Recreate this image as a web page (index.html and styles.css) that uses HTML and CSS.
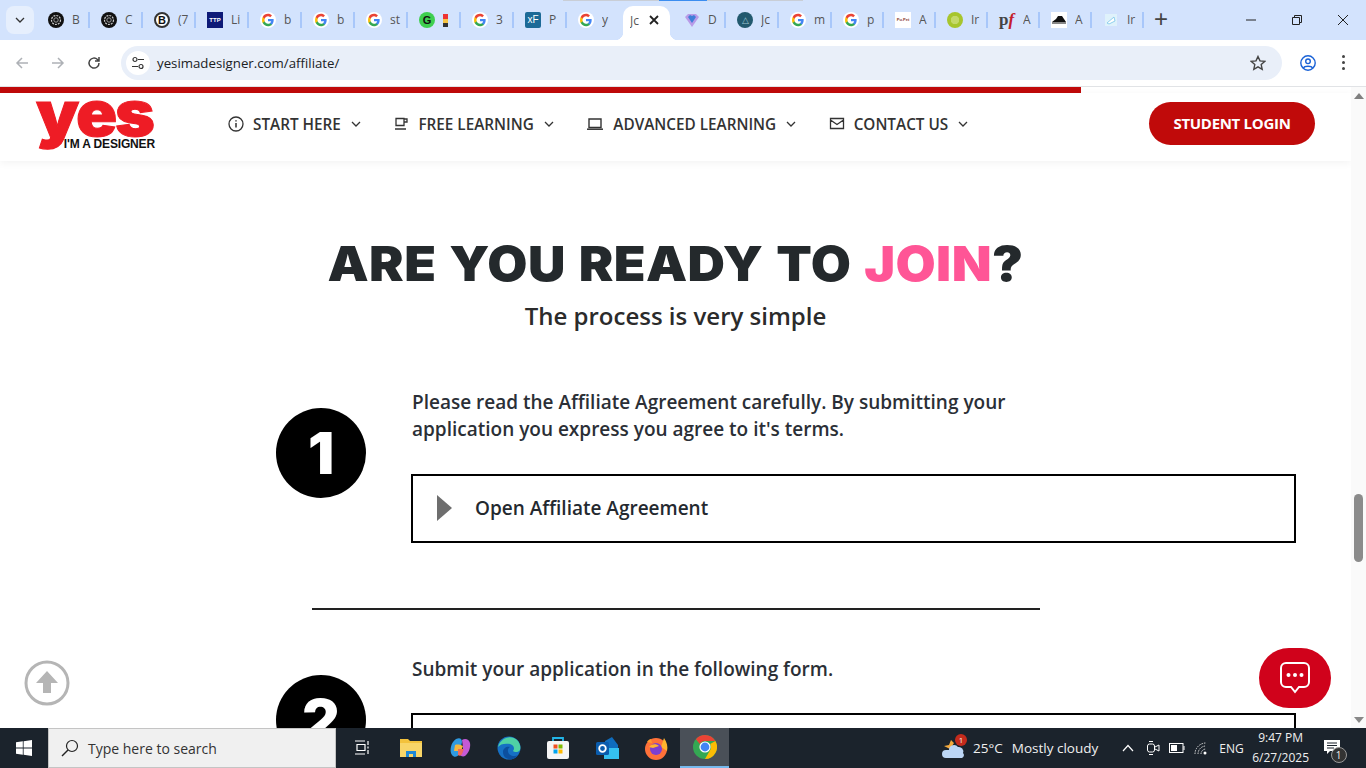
FILE: index.html
```html
<!DOCTYPE html>
<html lang="en">

<head>
    <meta charset="UTF-8">
    <title>Join - yes I'm a designer</title>
    <link rel="stylesheet" href="styles.css">
</head>

<body>
    <svg class="defs" width="0" height="0">
        <symbol id="g" viewBox="1.500 1.500 13 13">
            <circle cx="8" cy="8" r="6.500" fill="#fff" />
            <path d="M12.600 8.200c0-.4 0-.7-.1-1H8v1.900h2.600c-.1.600-.5 1.100-1 1.500v1.200h1.600c.9-.9 1.400-2.100 1.400-3.600z" fill="#4285f4" />
            <path d="M8 13c1.300 0 2.400-.4 3.200-1.200l-1.600-1.200c-.4.300-1 .5-1.600.5-1.200 0-2.300-.8-2.700-2H3.700v1.300C4.500 12 6.100 13 8 13z" fill="#34a853" />
            <path d="M5.300 9.100c-.2-.7-.2-1.500 0-2.200V5.600H3.700c-.7 1.400-.7 3.400 0 4.800z" fill="#fbbc05" />
            <path d="M8 5c.7 0 1.300.2 1.800.7l1.400-1.400C10.400 3.500 9.300 3 8 3 6.100 3 4.500 4 3.700 5.600l1.600 1.300C5.700 5.800 6.800 5 8 5z" fill="#ea4335" />
        </symbol>
        <symbol id="gpt" viewBox="0 0 16 16">
            <circle cx="8" cy="8" r="8" fill="#111" />
            <circle cx="8" cy="8" r="4.500" fill="none" stroke="#ccc" stroke-width="1.200" stroke-dasharray="2 1" />
            <circle cx="8" cy="8" r="2.200" fill="none" stroke="#999" />
        </symbol>
        <symbol id="chev" viewBox="0 0 10 6">
            <path d="M1 1l4 4 4-4" fill="none" stroke="#333" stroke-width="1.300" />
        </symbol>
    </svg>

    <div class="tabstrip">
        <div class="load-line"><span></span></div>
        <button class="tab-search"><svg width="10" height="6"><use href="#chev" /></svg></button>

        <div class="tab"><svg class="fav"><use href="#gpt" /></svg><span>B</span></div>
        <div class="tab"><svg class="fav"><use href="#gpt" /></svg><span>C</span></div>
        <div class="tab"><span class="fav fav-b">B</span><span>(7</span></div>
        <div class="tab"><span class="fav fav-ttp">TTP</span><span>Li</span></div>
        <div class="tab"><svg class="fav"><use href="#g" /></svg><span>b</span></div>
        <div class="tab"><svg class="fav"><use href="#g" /></svg><span>b</span></div>
        <div class="tab"><svg class="fav"><use href="#g" /></svg><span>st</span></div>
        <div class="tab"><span class="fav fav-green">G</span><span class="fav-flag"></span></div>
        <div class="tab"><svg class="fav"><use href="#g" /></svg><span>3</span></div>
        <div class="tab"><span class="fav fav-xf">xF</span><span>P</span></div>
        <div class="tab no-sep"><svg class="fav"><use href="#g" /></svg><span>y</span></div>
        <div class="tab-active"><span>Jc</span>
            <svg class="tab-x" width="10" height="10" viewBox="0 0 10 10"><path d="M1 1l8 8M9 1L1 9" stroke="#222" stroke-width="1.800" /></svg>
        </div>
        <div class="tab"><svg class="fav" viewBox="0 0 16 16">
                <path d="M1 5l3-3h8l3 3-7 10z" fill="#b99be8" />
                <path d="M4 5l2-2 2 1 2-1 2 2-4 6z" fill="#3f7fd8" />
            </svg><span>D</span></div>
        <div class="tab"><span class="fav fav-teal">&#9651;</span><span>Jc</span></div>
        <div class="tab"><svg class="fav"><use href="#g" /></svg><span>m</span></div>
        <div class="tab tab-tight"><svg class="fav"><use href="#g" /></svg><span>p</span></div>
        <div class="tab tab-tight"><span class="fav fav-pp">Pu.Pet</span><span>A</span></div>
        <div class="tab tab-tight"><span class="fav fav-lime"></span><span>Ir</span></div>
        <div class="tab tab-tight"><span class="fav fav-pf">p<i>f</i></span><span>A</span></div>
        <div class="tab tab-tight"><svg class="fav" viewBox="0 0 16 16">
                <rect width="16" height="16" fill="#fff" />
                <path d="M1 10l4-3 2-3h4l2 3 2 3v2H1z" fill="#111" />
                <path d="M1 11h14" stroke="#fff" />
            </svg><span>A</span></div>
        <div class="tab tab-tight"><svg class="fav" viewBox="0 0 16 16">
                <rect x="2" y="2" width="12" height="12" fill="#dff2fb" />
                <path d="M4 11l7-6 1 4-6 3z" fill="#fff" stroke="#8fd0ee" />
            </svg><span>Ir</span></div>
        <div class="tab-new">+</div>
        <div class="win-btns">
            <svg width="14" height="14" viewBox="0 0 14 14"><path d="M2 7h10" stroke="#222" /></svg>
            <svg width="14" height="14" viewBox="0 0 14 14"><path d="M2.500 4.500h7v7h-7zM4.500 4.500v-2h7v7h-2" fill="none" stroke="#222" /></svg>
            <svg width="14" height="14" viewBox="0 0 14 14"><path d="M2 2l10 10M12 2L2 12" stroke="#222" /></svg>
        </div>
    </div>

    <div class="toolbar">
        <svg class="tool-icon" viewBox="0 0 16 16"><path d="M14 8H3M8 3L3 8l5 5" fill="none" stroke="#aeb1b6" stroke-width="1.500" /></svg>
        <svg class="tool-icon" viewBox="0 0 16 16"><path d="M2 8h11M8 3l5 5-5 5" fill="none" stroke="#aeb1b6" stroke-width="1.500" /></svg>
        <svg class="tool-icon" viewBox="0 0 16 16"><path d="M13 8a5 5 0 1 1-1.500-3.500L13 6M13 2v4H9" fill="none" stroke="#444" stroke-width="1.500" /></svg>
        <div class="omnibox">
            <span class="site-info"><svg width="14" height="14" viewBox="0 0 14 14">
                    <circle cx="4" cy="3.500" r="2" fill="none" stroke="#333" stroke-width="1.200" />
                    <circle cx="10" cy="10.500" r="2" fill="none" stroke="#333" stroke-width="1.200" />
                    <path d="M7 3.500h6M1 10.500h6" stroke="#333" stroke-width="1.200" />
                </svg></span>
            <span class="url">yesimadesigner.com/affiliate/</span>
            <svg class="star" width="16" height="16" viewBox="0 0 16 16"><path d="M8 1.500l2 4.400 4.700.5-3.500 3.200 1 4.700L8 11.900l-4.200 2.400 1-4.700L1.300 6.400 6 5.900z" fill="none" stroke="#444" stroke-width="1.400" /></svg>
        </div>
        <svg class="profile" width="16" height="16" viewBox="0 0 16 16">
            <circle cx="8" cy="8" r="7.200" fill="none" stroke="#1a62d6" stroke-width="1.400" />
            <circle cx="8" cy="6.300" r="2.300" fill="none" stroke="#1a62d6" stroke-width="1.400" />
            <path d="M3.500 13c1-2.300 8-2.300 9 0" fill="none" stroke="#1a62d6" stroke-width="1.400" />
        </svg>
        <div class="dots"><i></i><i></i><i></i></div>
    </div>

    <div class="viewport">
        <div class="page">
            <div class="read-bar"></div>
            <header class="site-header">
                <a class="logo">
                    <span class="logo-yes">yes</span>
                    <span class="logo-sub">I'M A DESIGNER</span>
                </a>
                <nav class="main-nav">
                    <a class="nav-item">
                        <svg width="16" height="16" viewBox="0 0 16 16"><circle cx="8" cy="8" r="7" fill="none" stroke="#333" stroke-width="1.300" /><path d="M8 7v4.500M8 4.200v1.400" stroke="#333" stroke-width="1.500" /></svg>
                        START HERE
                        <svg class="nav-chev" width="10" height="6"><use href="#chev" /></svg>
                    </a>
                    <a class="nav-item">
                        <svg width="16" height="16" viewBox="0 0 16 16"><path d="M3 2.500h8v7H3zM11 3h3v3h-3M2 13h11" fill="none" stroke="#333" stroke-width="1.300" /></svg>
                        FREE LEARNING
                        <svg class="nav-chev" width="10" height="6"><use href="#chev" /></svg>
                    </a>
                    <a class="nav-item">
                        <svg width="18" height="16" viewBox="0 0 18 16"><path d="M3 3h12v8.500H3z" fill="none" stroke="#333" stroke-width="1.400" /><path d="M1 13.200h16" stroke="#333" stroke-width="1.500" /></svg>
                        ADVANCED LEARNING
                        <svg class="nav-chev" width="10" height="6"><use href="#chev" /></svg>
                    </a>
                    <a class="nav-item">
                        <svg width="16" height="16" viewBox="0 0 16 16"><path d="M1.500 2.500h13v10h-13zM1.500 4L8 8.500 14.500 4" fill="none" stroke="#333" stroke-width="1.300" /></svg>
                        CONTACT US
                        <svg class="nav-chev" width="10" height="6"><use href="#chev" /></svg>
                    </a>
                </nav>
                <a class="login-btn">STUDENT LOGIN</a>
            </header>

            <main class="join">
                <h1 class="join-title">ARE YOU READY TO <span class="pink">JOIN</span>?</h1>
                <p class="join-sub">The process is very simple</p>

                <section class="step">
                    <div class="step-num">1</div>
                    <div class="step-body">
                        <p class="step-text">Please read the Affiliate Agreement carefully. By submitting your<br>application you express you agree to it's terms.</p>
                        <div class="toggle"><span class="caret"></span>Open Affiliate Agreement</div>
                    </div>
                </section>

                <hr class="divider">

                <section class="step step-two">
                    <div class="step-num">2</div>
                    <div class="step-body">
                        <p class="step-text">Submit your application in the following form.</p>
                        <div class="toggle"></div>
                    </div>
                </section>
            </main>
        </div>

        <div class="scrollbar">
            <span class="arrow-up"></span>
            <span class="thumb"></span>
            <span class="arrow-down"></span>
        </div>

        <a class="to-top"><svg width="46" height="46" viewBox="0 0 46 46">
                <circle cx="23" cy="23" r="21" fill="#fff" stroke="#b5b5b5" stroke-width="3" />
                <path d="M23 11L12 23h7v10h8V23h7z" fill="#b5b5b5" />
            </svg></a>
        <a class="chat-btn"><svg width="36" height="36" viewBox="0 0 36 36">
                <path d="M9 3h18a5 5 0 0 1 5 5v14a5 5 0 0 1-5 5h-5l-4 5-4-5H9a5 5 0 0 1-5-5V8a5 5 0 0 1 5-5z" fill="none" stroke="#fff" stroke-width="2" />
                <circle cx="11.500" cy="15" r="2" fill="#fff" />
                <circle cx="18" cy="15" r="2" fill="#fff" />
                <circle cx="24.500" cy="15" r="2" fill="#fff" />
            </svg></a>
    </div>

    <footer class="taskbar">
        <div class="start"><svg width="16" height="16" viewBox="0 0 16 16"><path d="M0 2.300l6.800-1v6.300H0zM7.600 1.200L16 0v7.600H7.600zM0 8.400h6.800v6.300L0 13.700zM7.600 8.400H16V16l-8.400-1.200z" fill="#fff" /></svg></div>
        <div class="task-search">
            <svg width="18" height="18" viewBox="0 0 18 18"><circle cx="11" cy="7" r="5.500" fill="none" stroke="#222" stroke-width="1.200" /><path d="M7 11l-6 6" stroke="#222" stroke-width="1.400" /></svg>
            <span>Type here to search</span>
        </div>
        <div class="task-apps">
            <span class="task-app"><svg width="16" height="16" viewBox="0 0 16 16"><path d="M1 1h10M3 4.500h8v6H3zM1 14h10M14 1v4M14 6.500v2M14 10v4" fill="none" stroke="#fff" stroke-width="1.200" /></svg></span>
            <span class="task-app"><svg width="22" height="20" viewBox="0 0 22 20"><path d="M0 1h8l2 2h12v16H0z" fill="#f3c23c" /><path d="M0 5h22v14H0z" fill="#f8d568" /><path d="M6 13h10v6h-3v-3H9v3H6z" fill="#1e88d6" /></svg></span>
            <span class="task-app"><svg width="22" height="22" viewBox="0 0 22 22"><path d="M7 2c4-2 6 0 6 3l-3 12c-1 3-5 4-7 1-3-4-1-13 4-16z" fill="#2f9ae0" /><path d="M13 3c3-2 7-1 8 3 1 5-2 11-5 13-2 1-5 0-6-2 4 0 4-4 4-7z" fill="#c45ad6" /><path d="M6 8c3-1 6 0 8 1l-2 5-7 0z" fill="#f4b63f" /><path d="M9 12h6l-2 5c-1 2-3 2-4 1z" fill="#ef6a5e" /></svg></span>
            <span class="task-app"><svg width="24" height="24" viewBox="0 0 24 24"><circle cx="12" cy="12" r="11.500" fill="#1670c4" /><path d="M1 11C3 3 13-2 20 4c3 3 4 7 3 10-1 2-5 3-7 1 2-2 1-6-3-7-5-1-10 0-12 3z" fill="#4fd1a5" /><path d="M6 16c0-4 4-6 7-5-2 1-3 4-1 7 2 2 6 3 9 1-3 5-9 5-12 3-2-1-3-4-3-6z" fill="#0c4f9e" /></svg></span>
            <span class="task-app"><svg width="24" height="24" viewBox="0 0 24 24"><path d="M7 6V2h10v4" fill="none" stroke="#22b5e8" stroke-width="1.800" /><rect x="1" y="5" width="22" height="18" rx="2" fill="#f5f5f5" /><rect x="7.500" y="8.500" width="4" height="4" fill="#f25022" /><rect x="12.500" y="8.500" width="4" height="4" fill="#7fba00" /><rect x="7.500" y="13.500" width="4" height="4" fill="#00a4ef" /><rect x="12.500" y="13.500" width="4" height="4" fill="#ffb900" /></svg></span>
            <span class="task-app"><svg width="24" height="24" viewBox="0 0 24 24"><path d="M10 5l7-4 6 8v12H9z" fill="#0f6cbd" /><path d="M9 12h15v11H9z" fill="#35c0f0" /><rect x="1" y="6" width="13" height="13" rx="1.500" fill="#0a5cad" /><circle cx="7.500" cy="12.500" r="3.300" fill="none" stroke="#fff" stroke-width="1.800" /></svg></span>
            <span class="task-app"><svg width="24" height="24" viewBox="0 0 24 24"><circle cx="12" cy="13" r="11" fill="#ff7139" /><path d="M20 2c3 4 4 9 3 13l-6-4z" fill="#ffb52e" /><path d="M3 6c1-2 3-3 4-3l1 4z" fill="#ff9a2e" /><circle cx="12" cy="13" r="6" fill="#7d3fd0" /><path d="M5 11c2-3 7-4 10-1l-6 2z" fill="#ffb52e" /></svg></span>
            <span class="task-app task-chrome"><svg width="24" height="24" viewBox="0 0 24 24"><circle cx="12" cy="12" r="12" fill="#34a853" /><path d="M12 0a12 12 0 0 1 10.400 6H12a6 6 0 0 0-5.200 3L2.900 4.200A12 12 0 0 1 12 0z" fill="#ea4335" /><path d="M22.400 6A12 12 0 0 1 12 24l5.200-9A6 6 0 0 0 17.200 9z" fill="#fbbc05" /><circle cx="12" cy="12" r="5.600" fill="#fff" /><circle cx="12" cy="12" r="4.400" fill="#4285f4" /></svg></span>
        </div>
        <div class="tray">
            <span class="weather">
                <svg width="26" height="24" viewBox="0 0 26 24"><path d="M3 10l5-1 2-5 3 3-4 6z" fill="#f3a93c" /><path d="M8 14a5 5 0 0 1 9-3 4.500 4.500 0 0 1 5 6 3 3 0 0 1-1 5H5a4 4 0 0 1 0-8z" fill="#bcd6f5" /></svg>
                <b class="weather-badge">1</b>
            </span>
            <span class="tray-temp">25°C</span>
            <span class="tray-cond">Mostly cloudy</span>
            <svg class="tray-caret" width="12" height="8" viewBox="0 0 12 8"><path d="M1 7l5-5.500L11 7" fill="none" stroke="#fff" stroke-width="1.200" /></svg>
            <svg width="14" height="16" viewBox="0 0 14 16"><rect x="1.500" y="4" width="7" height="8" rx="2" fill="none" stroke="#fff" /><path d="M9 7l4-2v6l-4-2M3 1.500h4M3 14.500h4" fill="none" stroke="#fff" /></svg>
            <svg width="16" height="10" viewBox="0 0 16 10"><rect x=".5" y=".5" width="13.500" height="9" fill="none" stroke="#fff" /><rect x="2" y="2" width="6" height="6" fill="#fff" /><path d="M15 3v4" stroke="#fff" /></svg>
            <svg width="14" height="14" viewBox="0 0 14 14"><path d="M1 13A11 11 0 0 1 12 2M4 13a8 8 0 0 1 8-8M7 13a5 5 0 0 1 5-5" fill="none" stroke="#ddd" stroke-dasharray="1.500 1" /><circle cx="11" cy="12" r="1.500" fill="#fff" /></svg>
            <span class="tray-lang">ENG</span>
            <span class="clock"><span>9:47 PM</span><span>6/27/2025</span></span>
            <span class="notify">
                <svg width="16" height="15" viewBox="0 0 16 15"><path d="M0 0h16v11H6l-3 3v-3H0z" fill="#fff" /><path d="M3 3h10M3 5.500h10M3 8h7" stroke="#1b232c" /></svg>
                <b class="notify-badge">1</b>
            </span>
        </div>
    </footer>
</body>

</html>
```

FILE: styles.css
```css
* {
    margin: 0;
    padding: 0;
    box-sizing: border-box;
}

body {
    width: 1366px;
    height: 768px;
    overflow: hidden;
    font-family: 'Open Sans', sans-serif;
    background: #fff;
    display: flex;
    flex-direction: column;
}

.defs {
    position: absolute;
}

/* browser chrome */

.tabstrip {
    height: 40px;
    flex: none;
    background: #d3e3fd;
    display: flex;
    align-items: flex-start;
    padding-left: 6px;
    position: relative;
    font-size: 12px;
    color: #555;
}

.load-line {
    position: absolute;
    top: 0;
    left: 563px;
    width: 240px;
    height: 1px;
    background: #c9ced6;
}

.load-line span {
    display: block;
    width: 48px;
    height: 1px;
    margin-left: 96px;
    background: #3b8df0;
}

.tab-search {
    width: 28px;
    height: 28px;
    margin-top: 6px;
    margin-right: 4px;
    border: 0;
    border-radius: 8px;
    background: #e6effd;
    display: flex;
    align-items: center;
    justify-content: center;
}

.tab {
    width: 53px;
    height: 16px;
    margin-top: 12px;
    padding-left: 10px;
    display: flex;
    align-items: center;
    gap: 8px;
    position: relative;
    overflow: visible;
    flex: none;
}

.tab-tight {
    width: 52px;
}

.tab::after {
    content: '';
    position: absolute;
    right: 1px;
    top: 0;
    width: 2px;
    height: 16px;
    background: #a8c7fa;
}

.tab.no-sep::after {
    display: none;
}

.tab span:last-child {
    width: 11px;
    overflow: hidden;
    white-space: nowrap;
    line-height: 16px;
}

.fav {
    width: 16px;
    height: 16px;
    flex: none;
    display: block;
}

.fav-b {
    background: #fff;
    border: 2px solid #333;
    border-radius: 50%;
    font: bold 11px/12px 'Liberation Sans', sans-serif;
    color: #111;
    text-align: center;
}

.tab .fav-ttp {
    background: #0d1a78;
    color: #fff;
    font: bold 6px/16px 'Liberation Sans', sans-serif;
    text-align: center;
}

.fav-green {
    background: #3ecf4f;
    border-radius: 50%;
    font: bold 11px/16px 'Liberation Sans', sans-serif;
    color: #111;
    text-align: center;
}

.tab span.fav-flag {
    width: 5px;
    height: 13px;
    margin-left: 0;
    background: linear-gradient(#e33 0 40%, #f6c343 40% 70%, #333 70%);
}

.fav-xf {
    background: #1c6a97;
    border-radius: 2px;
    color: #fff;
    font: 10px/16px 'Liberation Sans', sans-serif;
    text-align: center;
}

.fav-teal {
    background: #22596e;
    border-radius: 50%;
    color: #9fc6d2;
    font-size: 9px;
    line-height: 16px;
    text-align: center;
}

.tab .fav-pp {
    background: #fff;
    color: #8a3b2c;
    font: bold 4px/16px 'Liberation Sans', sans-serif;
    text-align: center;
    white-space: nowrap;
    overflow: hidden;
}

.fav-lime {
    background: radial-gradient(circle, #c4d96a 0 4px, #a7c52d 4.500px);
    border-radius: 50%;
}

.fav-pf {
    font: bold 17px/16px 'Liberation Serif', serif;
    color: #444;
    white-space: nowrap;
}

.fav-pf i {
    color: #c4202c;
}

.tab-active {
    width: 47px;
    height: 34px;
    margin: 6px 4px 0 2px;
    padding: 0 0 6px 7px;
    background: #fff;
    border-radius: 10px 10px 0 0;
    display: flex;
    align-items: center;
    flex: none;
    position: relative;
}

.tab-active::before,
.tab-active::after {
    content: '';
    position: absolute;
    bottom: 0;
    width: 8px;
    height: 8px;
}

.tab-active::before {
    left: -8px;
    background: radial-gradient(circle at 0 0, transparent 8px, #fff 8.500px);
}

.tab-active::after {
    right: -8px;
    background: radial-gradient(circle at 100% 0, transparent 8px, #fff 8.500px);
}

.tab-active span {
    width: 10px;
    overflow: hidden;
    white-space: nowrap;
}

.tab-x {
    margin-left: 9px;
}

.tab-new {
    margin: 7px 0 0 9px;
    font: 24px/24px 'Liberation Sans', sans-serif;
    color: #444;
}

.win-btns {
    position: absolute;
    right: 16px;
    top: 13px;
    display: flex;
    gap: 32px;
}

.toolbar {
    height: 47px;
    flex: none;
    background: #fff;
    border-radius: 8px 8px 0 0;
    border-bottom: 1px solid #e1e3e6;
    display: flex;
    align-items: center;
    padding: 0 0 1px 14px;
}

.tool-icon {
    width: 16px;
    height: 16px;
    margin-right: 20px;
    flex: none;
}

.toolbar .tool-icon:nth-child(3) {
    margin-right: 19px;
}

.omnibox {
    width: 1161px;
    height: 34px;
    background: #e9eff9;
    border-radius: 17px;
    display: flex;
    align-items: center;
    padding: 0 16px 0 5px;
    flex: none;
}

.site-info {
    width: 24px;
    height: 24px;
    background: #fff;
    border-radius: 50%;
    display: flex;
    align-items: center;
    justify-content: center;
}

.url {
    margin-left: 7px;
    font-size: 13.250px;
    color: #202124;
    flex: 1;
}

.profile {
    margin-left: 18px;
    flex: none;
}

.dots {
    margin-left: 26px;
    display: flex;
    flex-direction: column;
    gap: 3px;
}

.dots i {
    width: 3px;
    height: 3px;
    border-radius: 50%;
    background: #444;
}

/* page */

.viewport {
    height: 641px;
    flex: none;
    position: relative;
    overflow: hidden;
}

.page {
    width: 1351px;
    height: 641px;
    overflow: hidden;
}

.read-bar {
    width: 1081px;
    height: 6px;
    background: #c00a0a;
}

.site-header {
    height: 68px;
    padding-bottom: 8px;
    display: flex;
    align-items: center;
    position: relative;
    box-shadow: 0 2px 8px rgba(0, 0, 0, 0.05);
}

.logo {
    width: 120px;
    height: 56px;
    margin-left: 36px;
    position: relative;
    flex: none;
}

.logo-yes {
    display: block;
    font: 900 63px/46px 'Inter', sans-serif;
    letter-spacing: -2px;
    color: #ee1c25;
    margin-top: -5px;
    -webkit-text-stroke: 1px #ee1c25;
    transform: scaleX(1.080);
    transform-origin: left;
}

.logo-sub {
    position: absolute;
    right: 1px;
    bottom: 0;
    font: bold 12px/14px 'Liberation Sans', sans-serif;
    letter-spacing: -0.150px;
    color: #111;
}

.main-nav {
    margin-left: 72px;
    margin-top: 2px;
    display: flex;
    gap: 32.500px;
    flex: none;
}

.nav-item {
    display: flex;
    align-items: center;
    gap: 9px;
    font-size: 15.300px;
    font-weight: 600;
    color: #333;
    height: 20px;
    white-space: nowrap;
}

.nav-chev {
    margin-left: 1px;
}

.login-btn {
    margin-left: auto;
    margin-right: 36px;
    width: 166px;
    height: 43px;
    border-radius: 22px;
    background: #c00a0a;
    color: #fff;
    font-size: 15px;
    font-weight: 700;
    letter-spacing: -0.300px;
    display: flex;
    align-items: center;
    justify-content: center;
}

.join {
    text-align: center;
}

.join-title {
    margin-top: 73px;
    font: 900 48px/60px 'Inter', sans-serif;
    letter-spacing: 0.400px;
    word-spacing: 2px;
    color: #24292c;
    transform: scaleX(1.080);
}

.pink {
    color: #ff5596;
}

.join-sub {
    margin-top: 5px;
    font-size: 24px;
    line-height: 34px;
    font-weight: 600;
    color: #2b2b2b;
}

.step {
    display: flex;
    align-items: flex-start;
    text-align: left;
    margin-left: 276px;
    margin-top: 55px;
}

.step-num {
    width: 90px;
    height: 90px;
    margin-top: 20px;
    border-radius: 50%;
    background: #000;
    color: #fff;
    font: 900 58px/90px 'Inter', sans-serif;
    text-align: center;
    flex: none;
}

.step-body {
    margin-left: 45px;
    width: 885px;
}

.step-text {
    margin: 1px 0 0 1px;
    font-size: 19px;
    line-height: 27px;
    font-weight: 600;
    color: #2b2f36;
    white-space: nowrap;
}

.toggle {
    margin-top: 31px;
    height: 69px;
    border: 2px solid #000;
    display: flex;
    align-items: center;
    padding: 0 0 1px 24px;
    font-size: 19px;
    font-weight: 600;
    color: #24292f;
}

.caret {
    width: 0;
    height: 0;
    margin-right: 23px;
    border-left: 15px solid #6e6e6e;
    border-top: 13px solid transparent;
    border-bottom: 13px solid transparent;
}

.divider {
    width: 728px;
    margin: 65px 0 0 312px;
    border: 0;
    border-top: 2px solid #222;
}

.step-two {
    margin-top: 45px;
}

.step-two .toggle {
    margin-top: 30px;
}

.scrollbar {
    position: absolute;
    right: 0;
    top: 0;
    width: 15px;
    height: 641px;
    background: #fafafa;
}

.arrow-up,
.arrow-down {
    position: absolute;
    left: 3px;
    width: 0;
    height: 0;
    border-left: 5px solid transparent;
    border-right: 5px solid transparent;
}

.arrow-up {
    top: 6px;
    border-bottom: 6px solid #808080;
}

.arrow-down {
    bottom: 5px;
    border-top: 6px solid #888;
}

.thumb {
    position: absolute;
    left: 3px;
    top: 407px;
    width: 9px;
    height: 68px;
    border-radius: 5px;
    background: #8b8b8b;
}

.to-top {
    position: absolute;
    left: 24px;
    top: 573px;
    height: 46px;
}

.chat-btn {
    position: absolute;
    left: 1259px;
    top: 561px;
    width: 72px;
    height: 60px;
    border-radius: 30px;
    background: #d0021b;
    display: flex;
    align-items: center;
    justify-content: center;
}

/* taskbar */

.taskbar {
    height: 40px;
    flex: none;
    background: #1b232c;
    display: flex;
    align-items: center;
    color: #fff;
    position: relative;
}

.start {
    width: 48px;
    display: flex;
    justify-content: center;
}

.task-search {
    width: 288px;
    height: 40px;
    background: #f0f0f0;
    border: 1px solid #c4c4c4;
    display: flex;
    align-items: center;
    gap: 9px;
    padding-left: 12px;
    color: #333;
    font-size: 14px;
}

.task-apps {
    display: flex;
    margin-left: 1px;
}

.task-app {
    width: 49px;
    height: 40px;
    display: flex;
    align-items: center;
    justify-content: center;
    flex: none;
}

.task-chrome {
    background: #4a5058;
    border-bottom: 2px solid #76b9ed;
}

.tray {
    position: absolute;
    left: 941px;
    right: 0;
    top: 0;
    height: 40px;
    display: flex;
    align-items: center;
    font-size: 13.500px;
    color: #f0f0f0;
}

.weather {
    position: relative;
    width: 26px;
    height: 24px;
    flex: none;
}

.weather-badge {
    position: absolute;
    left: 14px;
    top: -2px;
    width: 12px;
    height: 12px;
    border-radius: 50%;
    background: #c42b1c;
    font-size: 8px;
    line-height: 12px;
    text-align: center;
    font-weight: 400;
}

.tray-temp {
    margin-left: 6px;
}

.tray-cond {
    margin-left: 9px;
}

.tray-caret {
    margin-left: 24px;
    margin-right: 12px;
}

.tray svg + svg {
    margin-right: 9px;
}

.tray-lang {
    margin-left: 2px;
    font-size: 12px;
}

.clock {
    display: flex;
    flex-direction: column;
    align-items: center;
    width: 60px;
    margin-left: 7px;
    font-size: 12px;
    line-height: 20px;
}

.notify {
    position: relative;
    margin-left: 13px;
    width: 24px;
    height: 22px;
}

.notify svg {
    display: block;
    margin-top: 3px;
}

.notify-badge {
    position: absolute;
    left: 7px;
    top: 10px;
    width: 16px;
    height: 16px;
    border-radius: 50%;
    background: #333;
    border: 1px solid #999;
    font-size: 10px;
    line-height: 14px;
    text-align: center;
    font-weight: 400;
}
```
